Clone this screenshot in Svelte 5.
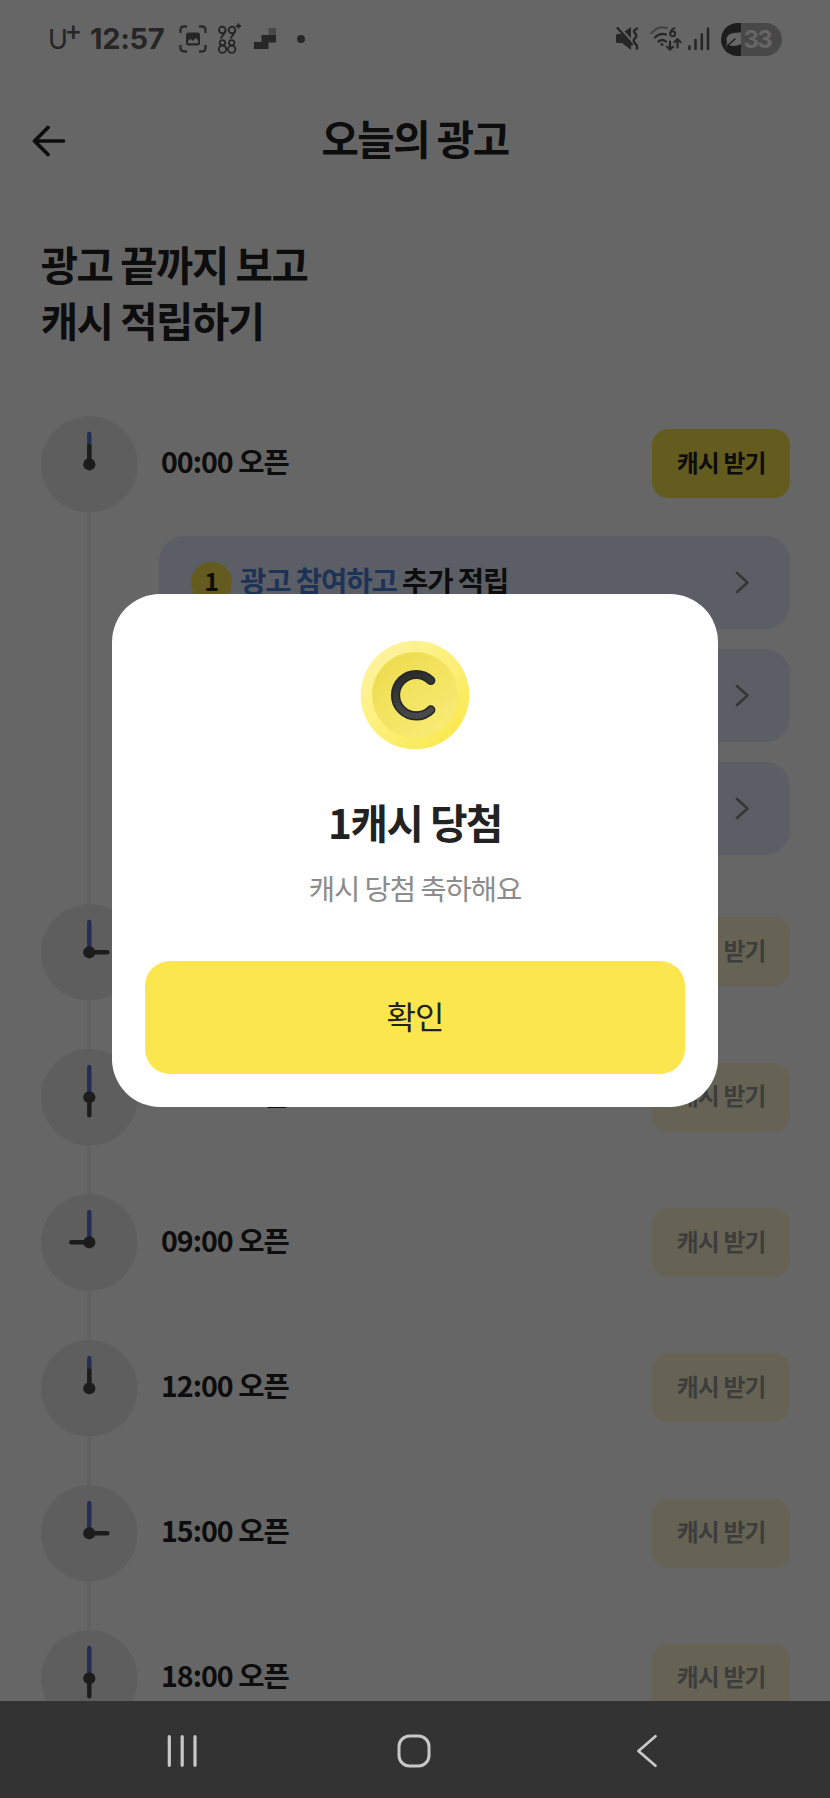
<script>
  const offers = [1, 2, 3];
  const slots = [
    { time: '00:00', angle: 0, open: true },
    { time: '03:00', angle: 90 },
    { time: '06:00', angle: 180 },
    { time: '09:00', angle: 270 },
    { time: '12:00', angle: 0 },
    { time: '15:00', angle: 90 },
    { time: '18:00', angle: 180 }
  ];
</script>

<div class="screen">
  <div class="status">
    <div class="side">
      <span class="carrier">U<sup>+</sup></span>
      <span class="clock">12:57</span>
      <svg class="capture" width="28" height="28" viewBox="0 0 28 28">
        <path d="M1.500 8V5q0-3.500 3.500-3.500h3M20 1.500h3q3.500 0 3.500 3.500v3M26.500 20v3q0 3.500-3.500 3.500h-3M8 26.500H5q-3.500 0-3.500-3.500v-3" fill="none" stroke="#696969" stroke-width="2.300" />
        <rect x="7" y="7.500" width="14" height="13" rx="2.500" fill="#606060" />
        <path d="M9 18.200v-2.200l2.500-2 2.500 2 2.500-3 2.500 2v3.200z" fill="#fff" />
      </svg>
      <svg class="nines" width="25" height="32" viewBox="0 0 25 32" fill="none" stroke="#606060" stroke-width="1.900">
        <circle cx="5.300" cy="7" r="3.300" /><circle cx="15" cy="7" r="3.300" />
        <path d="M8.600 7.300q-.2 2-5 8.200M18.300 7.300q-.2 2-5 8.200M19 3h5M21.500 .5v5" />
        <circle cx="5.500" cy="19.800" r="2.700" /><circle cx="5.500" cy="26.200" r="3.700" />
        <circle cx="14.700" cy="19.800" r="2.700" /><circle cx="14.700" cy="26.200" r="3.700" />
      </svg>
      <svg class="steps" width="22" height="22" viewBox="0 0 22 22">
        <path d="M0 14h7.500V7H22v7.500h-7.500V21H0z" fill="#606060" />
        <rect x="14.500" y="0" width="7.500" height="7" fill="#b4b4b4" />
      </svg>
      <i class="dot"></i>
    </div>
    <div class="side">
      <svg class="mute" width="23" height="24" viewBox="0 0 23 24">
        <path d="M0 8.500q0-1.500 1.500-1.500H5l10-7v23l-9-7H1.500Q0 16 0 14.500z" fill="#606060" />
        <path d="M2 -1l16 17" stroke="#fff" stroke-width="2" />
        <path d="M1.500 1l14.500 16.500" stroke="#606060" stroke-width="2.300" stroke-linecap="round" />
        <path d="M21 1.500q-4.500 2.300-2 4.700t0 5 0 5 2 5.300" fill="none" stroke="#606060" stroke-width="2.500" stroke-linecap="round" />
      </svg>
      <svg class="wifi" width="32" height="26" viewBox="0 0 32 26" fill="none" stroke="#606060" stroke-width="2.200" stroke-linecap="round">
        <path d="M1.500 7Q8-.5 17 2" stroke="#a8a8a8" />
        <path d="M5 11.500q5-5 11-3M8.500 15.500q4-3 7.500 0" />
        <circle cx="12" cy="18.500" r="1.500" fill="#606060" stroke="none" />
        <path d="M20 15.500v7.500M17 20.800l3 2.700 3-2.700M27.500 21.500v-7.500M24.500 16l3-2.700 3 2.700" />
        <path d="M24.500 2q-4.300 2-4.300 5.500" stroke-width="1.900" /><circle cx="22.700" cy="7.800" r="2.500" stroke-width="1.900" />
      </svg>
      <svg class="bars" width="22" height="24" viewBox="0 0 22 24" stroke="#606060" stroke-width="2.600" stroke-linecap="round">
        <path d="M1.500 19.500V22M7.500 13v9M13.800 7.500V22M20 1.500V22" />
      </svg>
      <div class="battery">
        <svg width="20" height="33" viewBox="0 0 20 33">
          <path d="M6 20Q4 14 9 11q4-2 11-1.500V21q-3 2-7.500 2-3 0-5-1.200Q6.500 24 4 24.500z" fill="#fff" />
          <path d="M3.500 24q6-3 11-8.500" stroke="#4a4a4a" stroke-width="1.300" fill="none" />
        </svg>
        <span>33</span>
      </div>
    </div>
  </div>

  <header>
    <svg width="34" height="32" viewBox="0 0 34 32" fill="none" stroke="#202020" stroke-width="3.700" stroke-linecap="round" stroke-linejoin="round">
      <path d="M16 2.500L2.500 16 16 29.500M3 16h28.500" />
    </svg>
    <h1>오늘의 광고</h1>
  </header>

  <main>
    <h2>광고 끝까지 보고<br />캐시 적립하기</h2>
    <ul>
      {#each slots as slot}
        <li class:first={slot.open}>
          <div class="rail">
            <svg class="face" viewBox="0 0 96.600 96.600">
              <circle cx="48.300" cy="48.300" r="48.300" fill="#ececec" />
              <path d="M48.300 48.300V18" stroke="#5b74cf" stroke-width="4.400" stroke-linecap="round" />
              <path class="hour" d="M48.300 48.300V30.300" transform={`rotate(${slot.angle} 48.300 48.300)`} />
              <circle cx="48.300" cy="48.300" r="6.100" fill="#484848" />
            </svg>
            <span class="line"></span>
          </div>
          <div class="body">
            <div class="row">
              <strong>{slot.time} 오픈</strong>
              <button class="claim" class:muted={!slot.open}>캐시 받기</button>
            </div>
            {#if slot.open}
              <div class="offers">
                {#each offers as n}
                  <div class="offer">
                    <span class="num">{n}</span>
                    <span class="label"><em>광고 참여하고</em> 추가 적립</span>
                    <svg width="15" height="23" viewBox="0 0 15 23" fill="none" stroke="#888" stroke-width="2.600" stroke-linecap="round" stroke-linejoin="round">
                      <path d="M2 2l10.500 9.500L2 21" />
                    </svg>
                  </div>
                {/each}
              </div>
            {/if}
          </div>
        </li>
      {/each}
    </ul>
  </main>

  <nav>
    <svg width="30" height="34" viewBox="0 0 30 34" stroke="#c8c8c8" stroke-width="3.200" stroke-linecap="round">
      <path d="M2.300 2.700v28.600M15.200 2.700v28.600M28 2.700v28.600" />
    </svg>
    <svg class="home" width="34" height="34" viewBox="0 0 34 34" fill="none" stroke="#c8c8c8" stroke-width="3">
      <rect x="2" y="2" width="30" height="30" rx="10.500" />
    </svg>
    <svg width="22" height="34" viewBox="0 0 22 34" fill="none" stroke="#c8c8c8" stroke-width="2.800" stroke-linecap="round" stroke-linejoin="round">
      <path d="M19.500 2.300L2.500 17l17 14.700" />
    </svg>
  </nav>

  <div class="scrim">
    <div class="dialog">
      <svg class="coin" width="110" height="110" viewBox="0 0 110 110">
        <defs>
          <linearGradient id="rim" x1="0.100" y1="0.100" x2="0.850" y2="0.900">
            <stop offset="0" stop-color="#fdf3a0" />
            <stop offset="0.500" stop-color="#fdf07a" />
            <stop offset="1" stop-color="#fae850" />
          </linearGradient>
          <linearGradient id="disc" x1="0.200" y1="0.100" x2="0.800" y2="0.900">
            <stop offset="0" stop-color="#eedd50" />
            <stop offset="1" stop-color="#f8ea74" />
          </linearGradient>
          <linearGradient id="ink" x1="0" y1="0" x2="0.300" y2="1">
            <stop offset="0" stop-color="#282828" />
            <stop offset="1" stop-color="#46484a" />
          </linearGradient>
        </defs>
        <circle cx="55" cy="55" r="54.300" fill="url(#rim)" />
        <circle cx="55" cy="55" r="43" fill="url(#disc)" />
        <path d="M70.800 40.500a20.700 20.700 0 1 0 0 29.400" fill="none" stroke="#262626" stroke-width="9.200" stroke-linecap="round" />
        <path d="M70.800 40.500a20.700 20.700 0 1 0 0 29.400" fill="none" stroke="url(#ink)" stroke-width="6" stroke-linecap="round" />
      </svg>
      <h3>1캐시 당첨</h3>
      <p>캐시 당첨 축하해요</p>
      <button class="ok">확인</button>
    </div>
  </div>
</div>

<style>
  :global(body) { margin: 0; background: #fff; }
  * { box-sizing: border-box; }
  .screen {
    position: relative;
    display: flex;
    flex-direction: column;
    width: 830px;
    height: 1798px;
    overflow: hidden;
    background: #fff;
    color: #222;
    font-family: 'Noto Sans CJK KR', sans-serif;
  }
  h1, h2, h3, p, ul { margin: 0; padding: 0; }
  button { border: 0; font-family: inherit; }

  .status {
    flex: none;
    display: flex;
    justify-content: space-between;
    align-items: center;
    height: 78px;
    padding: 0 48px;
    color: #606060;
  }
  .side { display: flex; align-items: center; }
  .carrier { width: 42px; font: 400 27px/30px Lato, sans-serif; white-space: nowrap; }
  .carrier sup { font-size: 26px; font-weight: 700; line-height: 0; vertical-align: 8px; margin-left: -2px; }
  .clock { width: 76px; font: 700 29px/36px Inter, sans-serif; letter-spacing: -0.3px; white-space: nowrap; }
  .capture { margin-left: 13px; }
  .nines { margin-left: 10px; }
  .steps { margin-left: 12px; }
  .dot { width: 8px; height: 8px; margin-left: 20.500px; border-radius: 50%; background: #606060; }
  .wifi { margin-left: 11px; }
  .bars { margin-left: 6px; }
  .battery {
    display: flex;
    align-items: center;
    width: 61px;
    height: 33px;
    margin-left: 11px;
    border-radius: 17px;
    overflow: hidden;
    background: linear-gradient(90deg, #4a4a4a 20px, #b4b4b4 20px);
    color: #fff;
  }
  .battery span { margin-left: 2.500px; font: 700 24px/33px Inter, sans-serif; letter-spacing: -1.800px; }

  header {
    flex: none;
    display: grid;
    grid-template-columns: 1fr auto 1fr;
    align-items: center;
    height: 126px;
    padding: 0 32px;
  }
  h1, h2, h3 { font-size: 40.600px; line-height: 56px; font-weight: 700; letter-spacing: -1.450px; }
  h1 { padding-bottom: 5.500px; }

  main { flex: 1; min-height: 0; overflow: hidden; padding: 31.500px 40px 0 40.700px; }
  ul { margin-top: 68.200px; list-style: none; }
  li { display: grid; grid-template-columns: 96.600px 1fr; column-gap: 21.700px; height: 145.300px; }
  li.first { height: 488px; }
  .rail { display: flex; flex-direction: column; align-items: center; }
  .face { flex: none; width: 96.600px; height: 96.600px; }
  .hour { stroke: #484848; stroke-width: 4.400; stroke-linecap: round; }
  .line { flex: 1; width: 4px; background: #efefef; }
  .row { display: flex; align-items: center; justify-content: space-between; height: 96.600px; }
  strong { padding: 0 0 6px 2px; font-size: 28.600px; line-height: 40px; font-weight: 700; letter-spacing: -1px; color: #222; }
  .claim {
    width: 137.600px;
    height: 69px;
    padding: 0 0 4px;
    border-radius: 16px;
    background: #fae64d;
    color: #222;
    font-size: 23.800px;
    line-height: 34px;
    font-weight: 700;
    letter-spacing: -0.800px;
  }
  .claim.muted { background: #fef8d2; color: #999; }
  .offers { display: grid; gap: 19.800px; margin-top: 23.400px; }
  .offer {
    display: flex;
    align-items: center;
    height: 93.200px;
    padding: 0 40px 0 32.500px;
    border-radius: 25px;
    background: #e4ebfb;
  }
  .num {
    width: 40.500px;
    height: 40.500px;
    border-radius: 50%;
    background: #fae64d;
    font-size: 25px;
    line-height: 37px;
    font-weight: 700;
    text-align: center;
  }
  .label { flex: 1; margin-left: 8px; padding-bottom: 4px; font-size: 28.600px; line-height: 40px; font-weight: 700; letter-spacing: -1.100px; }
  .label em { font-style: normal; color: #4a80dc; }

  nav {
    flex: none;
    display: flex;
    justify-content: space-between;
    align-items: center;
    height: 97px;
    padding: 3px 172px 0 167px;
    background: #333;
  }
  .home { margin-right: 5px; }

  .scrim {
    position: absolute;
    inset: 0 0 97px;
    display: flex;
    align-items: center;
    justify-content: center;
    background: rgba(0, 0, 0, 0.6);
  }
  .dialog {
    display: flex;
    flex-direction: column;
    align-items: center;
    width: 605.500px;
    height: 512.500px;
    padding: 45.500px 32.500px 32.500px;
    border-radius: 48px;
    background: #fff;
  }
  h3 { margin-top: 44px; }
  p { margin-top: 18px; font-size: 28.600px; line-height: 40px; letter-spacing: -1.100px; color: #8c8c8c; }
  .ok {
    width: 100%;
    height: 113px;
    margin-top: auto;
    padding: 0 0 5px;
    border-radius: 25px;
    background: #fbe64d;
    color: #222;
    font-size: 32px;
    line-height: 44px;
    letter-spacing: -0.900px;
  }
</style>
